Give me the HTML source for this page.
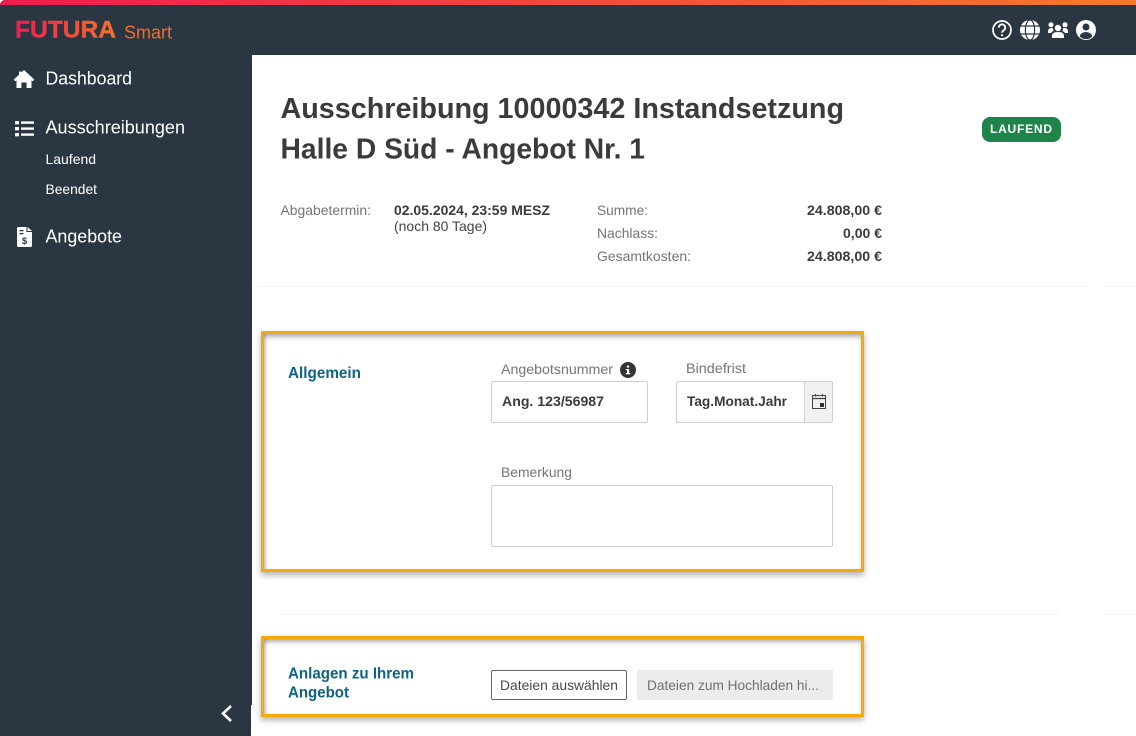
<!DOCTYPE html>
<html lang="de">
<head>
<meta charset="utf-8">
<title>Ausschreibung</title>
<style>
html,body{margin:0;padding:0;background:#fff;width:1136px;height:736px;overflow:hidden}
.a{position:absolute;box-sizing:border-box}
svg{position:absolute;left:0;top:0}
text{font-family:"Liberation Sans",sans-serif}
.box{border:3px solid #f6aa0a;box-shadow:0 3px 6px rgba(0,0,0,.32),inset 0 4px 5px -1px rgba(0,0,0,.3),inset 3px 0 4px -2px rgba(0,0,0,.25);background:#fff}
.f{border:1px solid #cfcfcf;border-radius:2px;background:#fff}
</style>
</head>
<body>
<div class="a" style="left:0;top:0;width:1136px;height:55px;background:#2a3641;border-top-left-radius:5px"></div>
<div class="a" style="left:0;top:0;width:1136px;height:5px;background:linear-gradient(90deg,#ed1c50 0%,#f2403f 40%,#f47a2b 100%);border-top-left-radius:5px"></div>
<div class="a" style="left:0;top:55px;width:252px;height:650px;background:#2a3641"></div>
<div class="a" style="left:0;top:705px;width:251px;height:31px;background:#2a3641"></div>

<div class="a" style="left:252px;top:286px;width:836px;height:1px;background:#f6f6f6"></div>
<div class="a" style="left:1104px;top:286px;width:32px;height:1px;background:#f6f6f6"></div>
<div class="a" style="left:280px;top:614px;width:780px;height:1px;background:#f6f6f6"></div>
<div class="a" style="left:1104px;top:614px;width:32px;height:1px;background:#f6f6f6"></div>

<div class="a box" style="left:261px;top:331px;width:603px;height:241px"></div>
<div class="a box" style="left:261px;top:636px;width:603px;height:81px"></div>

<div class="a f" style="left:491px;top:381px;width:157px;height:42px"></div>
<div class="a f" style="left:676px;top:381px;width:157px;height:42px"></div>
<div class="a" style="left:804px;top:382px;width:28px;height:40px;background:#f1f1f1;border-left:1px solid #d6d6d6"></div>
<div class="a f" style="left:491px;top:485px;width:342px;height:62px"></div>
<div class="a" style="left:491px;top:670px;width:136px;height:30px;border:1px solid #666;border-radius:2px;background:#fff"></div>
<div class="a" style="left:637px;top:670px;width:196px;height:30px;background:#ececec"></div>
<div class="a" style="left:982px;top:117px;width:79px;height:25px;background:#1e8449;border-radius:8px"></div>

<svg width="1136" height="736" viewBox="0 0 1136 736" xmlns="http://www.w3.org/2000/svg">
<defs>
<linearGradient id="g" gradientUnits="userSpaceOnUse" x1="15" y1="0" x2="125" y2="0">
<stop offset="0" stop-color="#ee1c50"/><stop offset="1" stop-color="#f47a2b"/>
</linearGradient>
</defs>
<text x="15" y="37.5" font-size="24" font-weight="700" fill="url(#g)" stroke="url(#g)" stroke-width=".4" textLength="101" lengthAdjust="spacingAndGlyphs">FUTURA</text>
<text x="124" y="38.5" font-size="18" fill="#f36c2d" textLength="48" lengthAdjust="spacingAndGlyphs">Smart</text>

<g fill="#fff">
<text x="45.5" y="84.5" font-size="18" textLength="86.5" lengthAdjust="spacingAndGlyphs">Dashboard</text>
<text x="45.5" y="133.5" font-size="18" textLength="139.5" lengthAdjust="spacingAndGlyphs">Ausschreibungen</text>
<text x="45.5" y="164" font-size="14" textLength="50.5" lengthAdjust="spacingAndGlyphs">Laufend</text>
<text x="45.5" y="194" font-size="14" textLength="51.5" lengthAdjust="spacingAndGlyphs">Beendet</text>
<text x="45.5" y="242.5" font-size="18" textLength="76.5" lengthAdjust="spacingAndGlyphs">Angebote</text>

<!-- home -->
<path d="M24 70 L34.4 79.6 L32.6 81.2 L31.5 80.2 V88 H26.6 V82.5 H21.4 V88 H16.5 V80.2 L15.4 81.2 L13.6 79.6 L19 74.7 V71.5 H21.5 V72.4 Z"/>
<!-- list -->
<rect x="15" y="121" width="4" height="3.4" rx=".6"/><rect x="15" y="127" width="4" height="3.4" rx=".6"/><rect x="15" y="133" width="4" height="3.4" rx=".6"/>
<rect x="21" y="121.4" width="13" height="2.4"/><rect x="21" y="127.4" width="13" height="2.4"/><rect x="21" y="133.4" width="13" height="2.4"/>
<!-- invoice -->
<path fill-rule="evenodd" d="M18.5 227 H26.5 V232 H32 V245.5 a1.5 1.5 0 0 1 -1.5 1.5 H18.5 a1.5 1.5 0 0 1 -1.5 -1.5 V228.5 a1.5 1.5 0 0 1 1.5 -1.5 Z M19.5 230 v1.2 h4 v-1.2 Z M19.5 233 v1.2 h4 v-1.2 Z"/>
<path d="M27.5 227 L32 231 H27.5 Z"/>
<text x="24.5" y="244" font-size="9.5" font-weight="700" fill="#2a3641" text-anchor="middle">$</text>

<!-- help -->
<circle cx="1002" cy="30" r="9" fill="none" stroke="#fff" stroke-width="1.7"/>
<path d="M998.8 27.6 a3.2 3.2 0 1 1 5 2.6 c-1.2.8 -1.8 1.3 -1.8 2.5" fill="none" stroke="#fff" stroke-width="1.8"/>
<circle cx="1002" cy="35.2" r="1.1"/>
<!-- globe -->
<circle cx="1030" cy="30" r="10"/>
<g fill="none" stroke="#2a3641" stroke-width="1.2">
<path d="M1020 26 H1040 M1020 34 H1040"/>
<ellipse cx="1030" cy="30" rx="4.6" ry="10"/>
</g>
<!-- users -->
<circle cx="1058" cy="28" r="3.2"/>
<path d="M1052 38 v-2.5 a4 4 0 0 1 4 -3.4 h4 a4 4 0 0 1 4 3.4 v2.5 Z"/>
<circle cx="1051" cy="24.8" r="2.5"/><circle cx="1065" cy="24.8" r="2.5"/>
<path d="M1048 33 v-2 a3 3 0 0 1 3 -3 h2 a5 5 0 0 0 .6 3 a5 5 0 0 0 -2.6 2 Z"/>
<path d="M1068 33 v-2 a3 3 0 0 0 -3 -3 h-2 a5 5 0 0 1 -.6 3 a5 5 0 0 1 2.6 2 Z"/>
<!-- account -->
<circle cx="1086" cy="30" r="10"/>
<circle cx="1086" cy="27" r="3.5" fill="#2a3641"/>
<path d="M1079.8 36.6 a6.2 4.6 0 0 1 12.4 0 a9 9 0 0 1 -12.4 0 Z" fill="#2a3641"/>
<!-- chevron -->
<path d="M231 706 L223 713.5 L231 721" fill="none" stroke="#fff" stroke-width="2.6"/>
</g>

<g fill="#3b3b3b" font-weight="700">
<text x="280.5" y="118" font-size="29" textLength="563.5" lengthAdjust="spacingAndGlyphs">Ausschreibung 10000342 Instandsetzung</text>
<text x="280.5" y="158.5" font-size="29" textLength="364.5" lengthAdjust="spacingAndGlyphs">Halle D Süd - Angebot Nr. 1</text>
<text x="394" y="215" font-size="14" textLength="156" lengthAdjust="spacingAndGlyphs">02.05.2024, 23:59 MESZ</text>
<text x="807" y="215" font-size="14" textLength="75" lengthAdjust="spacingAndGlyphs">24.808,00 €</text>
<text x="843" y="238" font-size="14" textLength="39" lengthAdjust="spacingAndGlyphs">0,00 €</text>
<text x="807" y="261" font-size="14" textLength="75" lengthAdjust="spacingAndGlyphs">24.808,00 €</text>
<text x="502" y="406" font-size="14" textLength="102" lengthAdjust="spacingAndGlyphs">Ang. 123/56987</text>
<text x="687" y="406" font-size="14" textLength="100" lengthAdjust="spacingAndGlyphs">Tag.Monat.Jahr</text>
</g>
<text x="990" y="133" font-size="12" font-weight="700" fill="#fff" textLength="62" lengthAdjust="spacing">LAUFEND</text>

<g fill="#757575" font-size="14">
<text x="280.5" y="215" textLength="90.5" lengthAdjust="spacingAndGlyphs">Abgabetermin:</text>
<text x="597" y="215" textLength="51" lengthAdjust="spacingAndGlyphs">Summe:</text>
<text x="597" y="238" textLength="61" lengthAdjust="spacingAndGlyphs">Nachlass:</text>
<text x="597" y="261" textLength="94" lengthAdjust="spacingAndGlyphs">Gesamtkosten:</text>
<text x="501" y="374" textLength="112" lengthAdjust="spacingAndGlyphs">Angebotsnummer</text>
<text x="686" y="373" textLength="60" lengthAdjust="spacingAndGlyphs">Bindefrist</text>
<text x="501" y="477" textLength="71" lengthAdjust="spacingAndGlyphs">Bemerkung</text>
</g>
<text x="394" y="231" font-size="14" fill="#444" textLength="93" lengthAdjust="spacingAndGlyphs">(noch 80 Tage)</text>

<g fill="#0f6282" font-weight="700" font-size="16">
<text x="288" y="378" textLength="73" lengthAdjust="spacingAndGlyphs">Allgemein</text>
<text x="288" y="678.5" textLength="126" lengthAdjust="spacingAndGlyphs">Anlagen zu Ihrem</text>
<text x="288" y="697.5" textLength="61" lengthAdjust="spacingAndGlyphs">Angebot</text>
</g>

<text x="500" y="690" font-size="14" fill="#4a4a4a" textLength="118" lengthAdjust="spacingAndGlyphs">Dateien auswählen</text>
<text x="647" y="690" font-size="14" fill="#6f6f6f" textLength="172" lengthAdjust="spacingAndGlyphs">Dateien zum Hochladen hi...</text>

<!-- info -->
<circle cx="628" cy="370" r="8" fill="#333"/>
<rect x="627" y="369" width="2.2" height="4.6" fill="#fff"/>
<rect x="625.8" y="373" width="4.6" height="1.3" fill="#fff"/>
<rect x="625.8" y="369" width="2" height="1.2" fill="#fff"/>
<circle cx="628" cy="366.6" r="1.2" fill="#fff"/>

<!-- calendar -->
<g fill="none" stroke="#444" stroke-width="1">
<rect x="812.5" y="395.5" width="13" height="13"/>
<path d="M812.5 398.5 H825.5" stroke-width="1.3"/>
<path d="M815.5 394 V396.5 M822.5 394 V396.5"/>
</g>
<rect x="820" y="403" width="4" height="4" fill="#333"/>
</svg>
</body>
</html>
